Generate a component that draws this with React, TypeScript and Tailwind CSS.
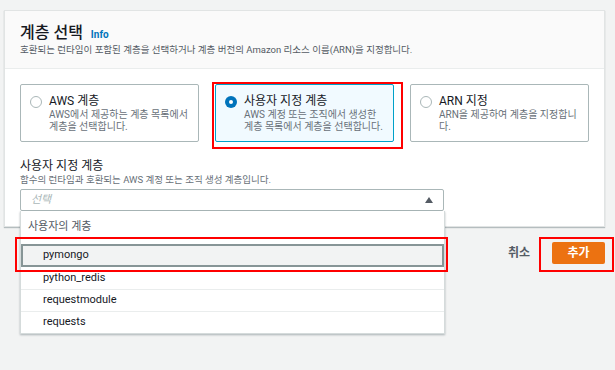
import React from "react";

const tiles = [
  { label: "AWS 계층", desc: ["AWS에서 제공하는 계층 목록에서", "계층을 선택합니다."], on: false },
  { label: "사용자 지정 계층", desc: ["AWS 계정 또는 조직에서 생성한", "계층 목록에서 계층을 선택합니다."], on: true },
  { label: "ARN 지정", desc: ["ARN을 제공하여 계층을 지정합니", "다."], on: false },
];

const items = ["pymongo", "python_redis", "requestmodule", "requests"];

function Radio({ on }: { on: boolean }) {
  if (on)
    return (
      <span className="mt-[2px] flex h-[12px] w-[12px] shrink-0 items-center justify-center rounded-full bg-[#0073bb]">
        <span className="h-[4px] w-[4px] rounded-full bg-white" />
      </span>
    );
  return <span className="mt-[2px] h-[12px] w-[12px] shrink-0 rounded-full border border-[#aab7b8] bg-white" />;
}

export default function App() {
  return (
    <div className="relative h-[370px] w-[615px] overflow-hidden bg-[#f2f3f3] pl-[4px] pr-[10px] pt-[10px] font-['Roboto','Noto_Sans_CJK_KR',sans-serif] text-[#16191f]">
      <section className="border border-[#e1e4e4] bg-white shadow-[0_1px_1px_0_rgba(0,28,36,0.25)]">
        <header className="border-b border-[#eaeded] bg-[#fafafa] px-[15px] pb-[12px] pt-[11px]">
          <div className="flex items-baseline gap-[8px]">
            <h2 className="text-[16px] font-medium leading-[22px]">계층 선택</h2>
            <span className="text-[10px] font-bold text-[#0073bb]">Info</span>
          </div>
          <p className="text-[9.5px] leading-[12px] text-[#545b64]">
            호환되는 런타임이 포함된 계층을 선택하거나 계층 버전의 Amazon 리소스 이름(ARN)을 지정합니다.
          </p>
        </header>

        <div className="px-[15px] pb-[15px] pt-[15px]">
          <div className="grid grid-cols-3 gap-[16px]">
            {tiles.map((t) => (
              <div
                key={t.label}
                className={
                  "flex h-[58px] gap-[7px] rounded-[2px] border pl-[9px] pt-[9px] " +
                  (t.on ? "border-[#00a1c9] bg-[#f1faff]" : "border-[#aab7b8] bg-white")
                }
              >
                <Radio on={t.on} />
                <div>
                  <div className="text-[12px] leading-[15px]">{t.label}</div>
                  <div className="whitespace-nowrap text-[10px] leading-[12px] text-[#687078]">
                    {t.desc[0]}
                    <br />
                    {t.desc[1]}
                  </div>
                </div>
              </div>
            ))}
          </div>

          <div className="mt-[16px] text-[12px] leading-[16px]">사용자 지정 계층</div>
          <div className="text-[9.5px] leading-[12px] text-[#687078]">
            함수의 런타임과 호환되는 AWS 계정 또는 조직 생성 계층입니다.
          </div>

          <div className="relative mt-[3px] w-[424px]">
            <div className="flex h-[22px] items-center justify-between rounded-[2px] border border-[#aab7b8] bg-white pl-[10px] pr-[10px]">
              <span className="text-[11px] italic text-[#aab7b8]">선택</span>
              <svg width="8" height="6" viewBox="0 0 8 6">
                <path d="M4 0 L8 6 L0 6 Z" fill="#545b64" />
              </svg>
            </div>

            <div className="absolute left-0 top-full z-10 w-[425px] border border-t-0 border-[#d5dbdb] bg-white shadow-[0_1px_2px_rgba(0,28,36,0.3)]">
              <div className="flex h-[33px] items-center pl-[7px] text-[11px] text-[#545b64]">사용자의 계층</div>
              {items.map((it, i) => (
                <div
                  key={it}
                  className={
                    "flex items-center text-[11px] " +
                    (i === 0
                      ? "h-[23px] border-2 border-[#879596] bg-[#f2f3f3] pl-[20px]"
                      : i > 1
                      ? "h-[22px] border-t border-[#eaeded] pl-[22px]"
                      : "h-[22px] pl-[22px]")
                  }
                >
                  {it}
                </div>
              ))}
            </div>
          </div>
        </div>
      </section>

      <div className="mt-[15px] flex items-center justify-end gap-[20px]">
        <button className="px-[2px] text-[12px] font-bold text-[#545b64]">취소</button>
        <button className="h-[22px] w-[53px] rounded-[2px] bg-[#ec7211] text-[12px] font-bold text-white">추가</button>
      </div>

      <div className="pointer-events-none absolute left-[212px] top-[82px] z-20 h-[67px] w-[191px] border-2 border-solid border-[#ff0000]" />
      <div className="pointer-events-none absolute left-[15px] top-[237px] z-20 h-[35px] w-[433px] border-2 border-solid border-[#ff0000]" />
      <div className="pointer-events-none absolute left-[539px] top-[237px] z-20 h-[35px] w-[75px] border-2 border-solid border-[#ff0000]" />
    </div>
  );
}
